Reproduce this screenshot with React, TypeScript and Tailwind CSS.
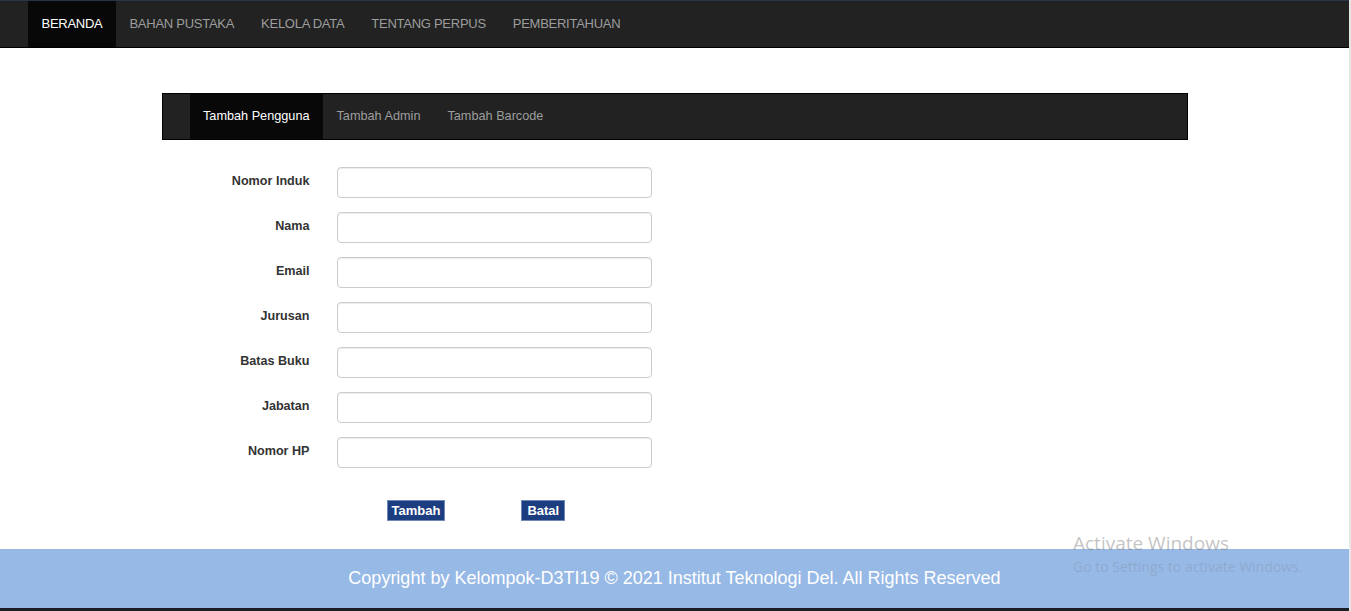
const menu = ["BERANDA", "BAHAN PUSTAKA", "KELOLA DATA", "TENTANG PERPUS", "PEMBERITAHUAN"];
const tabs = ["Tambah Pengguna", "Tambah Admin", "Tambah Barcode"];
const fields = ["Nomor Induk", "Nama", "Email", "Jurusan", "Batas Buku", "Jabatan", "Nomor HP"];

function TopNav() {
  return (
    <nav className="h-[48px] border-t border-t-[#2b3446] border-b border-b-black bg-[#222222] pl-[28px] flex">
      {menu.map((item, i) => (
        <a
          key={item}
          href="#"
          className={`flex items-center px-[13.5px] text-[13px] tracking-[-0.27px] ${
            i === 0 ? "bg-[#080808] text-white" : "text-[#9d9d9d]"
          }`}
        >
          {item}
        </a>
      ))}
    </nav>
  );
}

function SubNav() {
  return (
    <div className="h-[47px] border border-black bg-[#222222] pl-[27px] flex">
      {tabs.map((tab, i) => (
        <a
          key={tab}
          href="#"
          className={`flex items-center px-[13.5px] text-[12.7px] ${
            i === 0 ? "bg-[#080808] text-white" : "text-[#9d9d9d]"
          }`}
        >
          {tab}
        </a>
      ))}
    </div>
  );
}

function UserForm() {
  return (
    <form className="pt-[27px] flex flex-col gap-[14px]">
      {fields.map((label) => (
        <div key={label} className="flex items-start">
          <label className="w-[148px] text-right text-[12.6px] leading-[15px] font-bold text-[#333333] pt-[7px]">
            {label}
          </label>
          <input
            type="text"
            className="ml-[27px] w-[315px] h-[31px] rounded-[4px] border border-[#cccccc] bg-white px-3 outline-none shadow-[inset_0_1px_1px_rgba(0,0,0,0.075)]"
          />
        </div>
      ))}
      <div className="flex pl-[225px] gap-[76px] mt-[18px]">
        <button
          type="button"
          className="h-[21px] px-[4px] bg-[#1c3d80] border border-[#7089b8] text-white text-[13px] font-bold leading-[19px]"
        >
          Tambah
        </button>
        <button
          type="button"
          className="h-[21px] px-[5px] bg-[#1c3d80] border border-[#7089b8] text-white text-[13px] font-bold leading-[19px]"
        >
          Batal
        </button>
      </div>
    </form>
  );
}

export default function App() {
  return (
    <div className="relative w-[1351px] h-[611px] overflow-hidden bg-white flex font-['Liberation_Sans',Arial,sans-serif]">
      <div className="w-[1349px] flex flex-col">
        <TopNav />
        <main className="flex-1 pt-[45px]">
          <div className="w-[1026px] mx-auto">
            <SubNav />
            <UserForm />
          </div>
        </main>
        <footer className="h-[59px] bg-[#97b9e6] flex items-center justify-center text-white text-[18px]">
          Copyright by Kelompok-D3TI19 © 2021 Institut Teknologi Del. All Rights Reserved
        </footer>
        <div className="h-[3px] bg-[#1b1e24]" />
      </div>
      <div className="w-[2px] bg-[#e6e6e6]" />

      <div className="absolute left-[1073px] top-[530px] pointer-events-none font-['Open_Sans',sans-serif] text-[rgba(110,110,110,0.42)]">
        <div className="text-[19px] leading-[27px]">Activate Windows</div>
        <div className="text-[14px] leading-[19px] text-[rgba(110,110,110,0.22)]">
          Go to Settings to activate Windows.
        </div>
      </div>
    </div>
  );
}
